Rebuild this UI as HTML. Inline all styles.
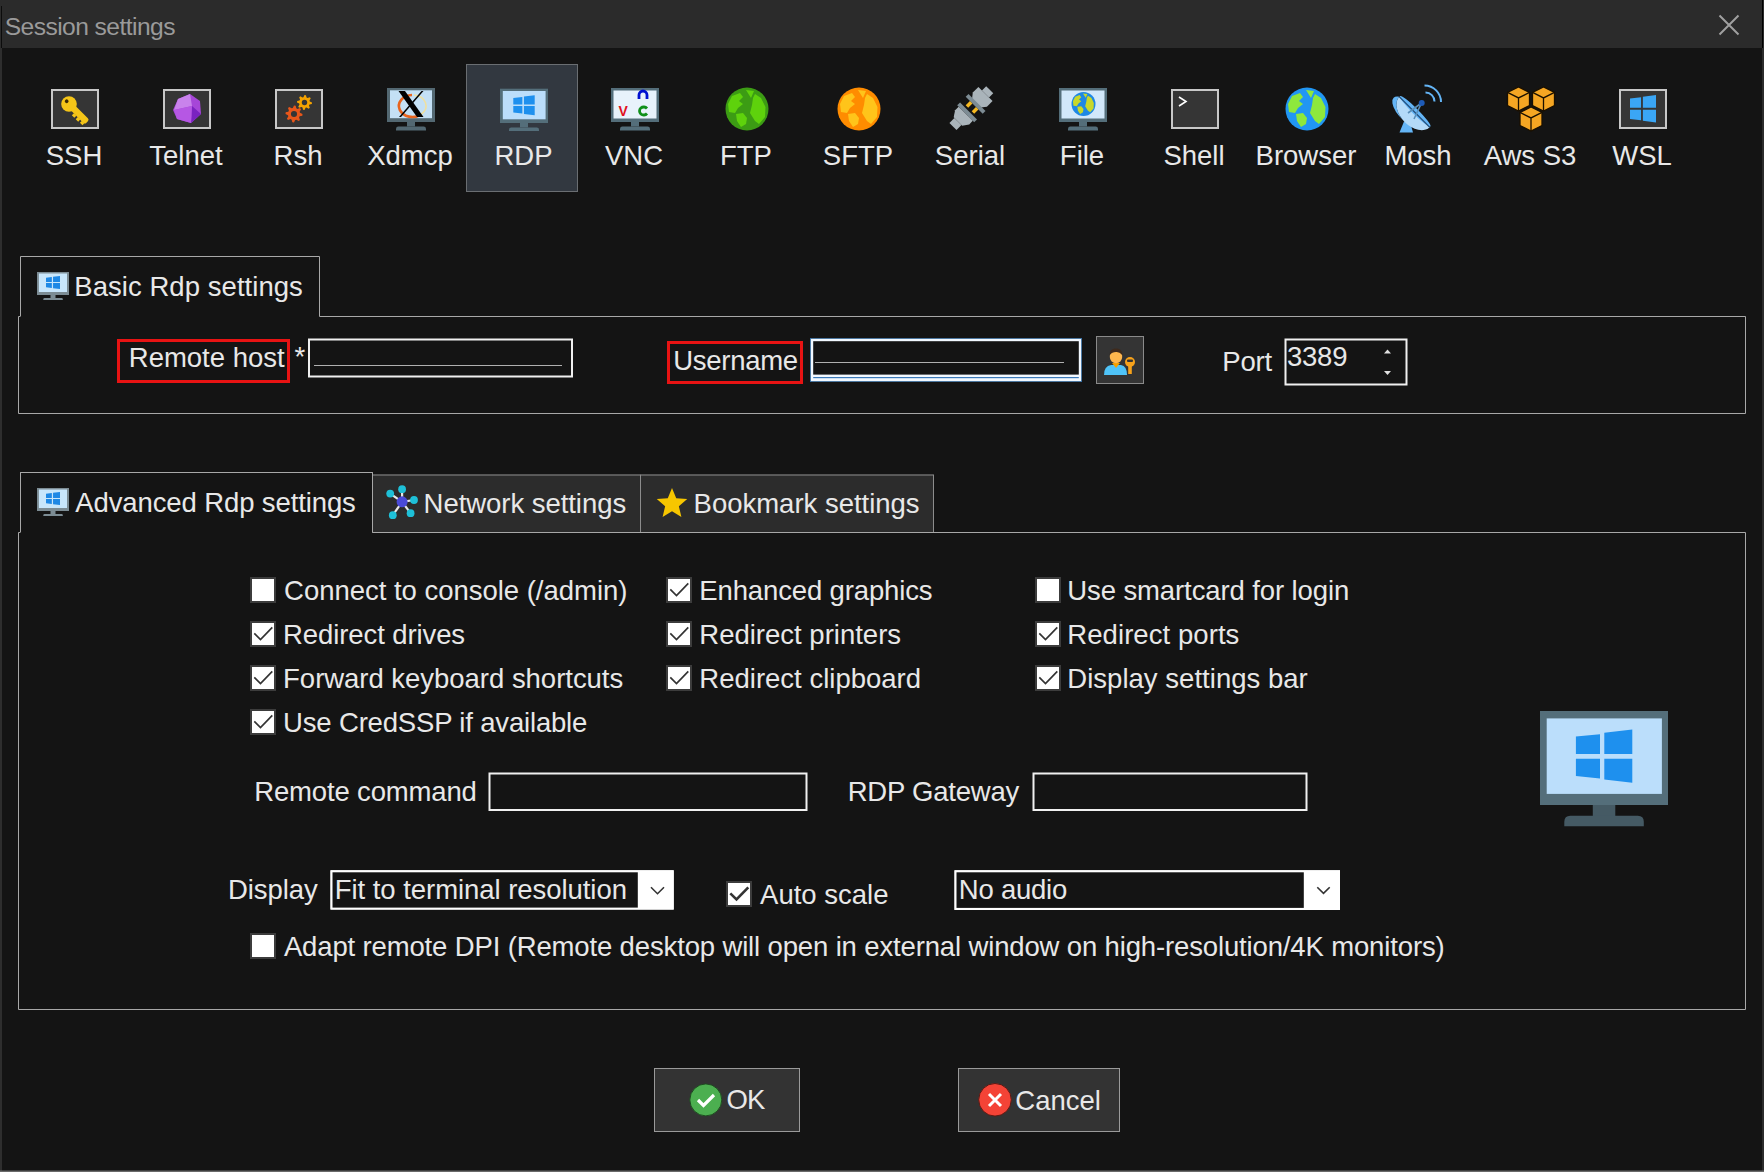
<!DOCTYPE html>
<html><head><meta charset="utf-8">
<style>
*{box-sizing:border-box;margin:0;padding:0}
html,body{width:1764px;height:1172px;overflow:hidden;background:#141414}
body{position:relative;font-family:"Liberation Sans",sans-serif;color:#e8e8e8;font-size:27.5px}
.t{position:absolute;white-space:nowrap;line-height:1}
.lbl{position:absolute;top:142px;width:112px;text-align:center;line-height:1;white-space:nowrap}
svg{position:absolute;left:0;top:0}
</style></head><body>
<svg width="1764" height="1172" viewBox="0 0 1764 1172">
<rect x="0" y="0" width="1764" height="48" fill="#2b2b2b"/>
<path d="M1719.5 15.5L1738.5 34.5M1738.5 15.5L1719.5 34.5" stroke="#a0a0a0" stroke-width="2" fill="none"/>
<rect x="466" y="64" width="112" height="128" fill="#323840"/>
<path fill-rule="evenodd" fill="#6a6e72" d="M466 64H578V192H466Z M467 65V191H577V65Z"/>
<rect x="51" y="89" width="48" height="40" fill="#353535"/>
<path fill-rule="evenodd" fill="#c8c8c8" d="M51 89H99V129H51Z M53 91V127H97V91Z"/>
<rect x="163" y="89" width="48" height="40" fill="#353535"/>
<path fill-rule="evenodd" fill="#c8c8c8" d="M163 89H211V129H163Z M165 91V127H209V91Z"/>
<rect x="275" y="89" width="48" height="40" fill="#353535"/>
<path fill-rule="evenodd" fill="#c8c8c8" d="M275 89H323V129H275Z M277 91V127H321V91Z"/>
<rect x="1171" y="89" width="48" height="40" fill="#353535"/>
<path fill-rule="evenodd" fill="#c8c8c8" d="M1171 89H1219V129H1171Z M1173 91V127H1217V91Z"/>
<rect x="1619" y="89" width="48" height="40" fill="#353535"/>
<path fill-rule="evenodd" fill="#c8c8c8" d="M1619 89H1667V129H1619Z M1621 91V127H1665V91Z"/>
<g transform="translate(69,104) rotate(45)"><rect x="3" y="-3.2" width="22.5" height="6.4" rx="2" fill="#f5c518"/><path d="M10 3H13.5V6H10Z M15.5 3H19V6H15.5Z M21 3H24.5V5.5H21Z" fill="#f5c518"/><circle cx="0" cy="0" r="7.8" fill="#f5c518"/><circle cx="-3.6" cy="-0.3" r="1.9" fill="#3b2a05"/></g>
<path d="M178 99L190 94L200 101L201 114L191 123L177 119L173 110Z" fill="#a646d8"/><path d="M178 99L190 94L192 106L174 110Z" fill="#c982ec"/><path d="M192 106L201 114L191 123Z" fill="#7a22c0"/><path d="M174 110L192 106L191 123L177 119Z" fill="#b657e4"/>
<polygon points="312.00,102.50 311.86,103.96 309.49,104.57 308.99,105.50 309.80,107.80 308.67,108.74 306.57,107.49 305.55,107.80 304.50,110.00 303.04,109.86 302.43,107.49 301.50,106.99 299.20,107.80 298.26,106.67 299.51,104.57 299.20,103.55 297.00,102.50 297.14,101.04 299.51,100.43 300.01,99.50 299.20,97.20 300.33,96.26 302.43,97.51 303.45,97.20 304.50,95.00 305.96,95.14 306.57,97.51 307.50,98.01 309.80,97.20 310.74,98.33 309.49,100.43 309.80,101.45" fill="#f5a300"/>
<circle cx="304.5" cy="102.5" r="2.70" fill="#353535"/>
<polygon points="302.50,114.00 302.34,115.66 299.65,116.34 299.09,117.40 300.01,120.01 298.72,121.07 296.34,119.65 295.19,120.00 294.00,122.50 292.34,122.34 291.66,119.65 290.60,119.09 287.99,120.01 286.93,118.72 288.35,116.34 288.00,115.19 285.50,114.00 285.66,112.34 288.35,111.66 288.91,110.60 287.99,107.99 289.28,106.93 291.66,108.35 292.81,108.00 294.00,105.50 295.66,105.66 296.34,108.35 297.40,108.91 300.01,107.99 301.07,109.28 299.65,111.66 300.00,112.81" fill="#e8561a"/>
<circle cx="294" cy="114" r="3.06" fill="#353535"/>
<rect x="387" y="88" width="48" height="34" fill="#536872"/>
<rect x="390" y="90.3" width="42" height="27.900000000000006" fill="#c4e0f5"/>
<rect x="407" y="122" width="8" height="4.5" fill="#536872"/>
<path d="M396 130.5V128.9Q396 126.5 398.4 126.5H423.6Q426 126.5 426 128.9V130.5Z" fill="#536872"/>
<path d="M412 95 A13.5 11 0 1 0 421 114.5" stroke="#e8641e" stroke-width="2.6" fill="none"/><path d="M421 114.5 A13.5 11 0 0 0 414 95" stroke="#efe0a0" stroke-width="1.6" fill="none"/><path d="M398.5 91H405L423.5 117H417Z" fill="#000"/><path d="M421.5 91H423.5L401 117H399Z" fill="#000"/>
<rect x="500" y="88.7" width="48" height="34.3" fill="#546e7a"/>
<rect x="502.8" y="91" width="42.80000000000001" height="28.299999999999997" fill="#bbdefb"/>
<rect x="520" y="123" width="8" height="4.400000000000006" fill="#546e7a"/>
<path d="M509 131V129.56Q509 127.4 511.15999999999997 127.4H536.84Q539 127.4 539 129.56V131Z" fill="#546e7a"/>
<path fill="#1e90ee" d="M513.3 97.887L522.344 96.9915V104.45H513.3Z M523.944 96.494L534.7 95.3V104.45H523.944Z M513.3 106.05H522.344V113.5085L513.3 112.613Z M523.944 106.05H534.7V115.2L523.944 114.006Z"/>
<rect x="611" y="88" width="48" height="34" fill="#546e7a"/>
<rect x="613.5" y="90.5" width="43.0" height="28.0" fill="#e8f2fb"/>
<rect x="631" y="122" width="8" height="4.5" fill="#546e7a"/>
<path d="M620 130.5V128.9Q620 126.5 622.4 126.5H647.6Q650 126.5 650 128.9V130.5Z" fill="#546e7a"/>
<text x="618.5" y="116" font-family="Liberation Sans" font-weight="bold" font-size="14" fill="#e01020">V</text><path d="M639 99 V95 A4 4 0 0 1 647 95 V99" stroke="#0010d0" stroke-width="2.8" fill="none"/><path d="M647 108.5 A4.2 4 0 1 0 647 113.5" stroke="#10901a" stroke-width="2.8" fill="none"/>
<circle cx="747" cy="109" r="21.5" fill="#3c9c14"/>
<polygon fill="#5ed20c" points="728.00,104.00 732.00,96.00 740.00,93.00 743.00,97.00 739.00,101.00 743.00,104.00 738.00,108.00 735.00,113.00 729.00,112.00"/>
<polygon fill="#5ed20c" points="736.00,114.00 743.00,113.00 747.00,118.00 746.00,124.00 741.00,127.00 737.00,121.00"/>
<polygon fill="#5ed20c" points="755.00,94.00 761.00,98.00 765.50,107.00 765.00,117.00 759.00,124.00 755.00,121.00 750.00,113.00 752.00,105.00 753.00,98.00"/>
<polygon fill="#5ed20c" points="746.00,90.00 754.00,91.00 751.00,98.00"/>
<circle cx="859" cy="109" r="21.5" fill="#ff8c00"/>
<polygon fill="#ffc41a" points="840.00,104.00 844.00,96.00 852.00,93.00 855.00,97.00 851.00,101.00 855.00,104.00 850.00,108.00 847.00,113.00 841.00,112.00"/>
<polygon fill="#ffc41a" points="848.00,114.00 855.00,113.00 859.00,118.00 858.00,124.00 853.00,127.00 849.00,121.00"/>
<polygon fill="#ffc41a" points="867.00,94.00 873.00,98.00 877.50,107.00 877.00,117.00 871.00,124.00 867.00,121.00 862.00,113.00 864.00,105.00 865.00,98.00"/>
<polygon fill="#ffc41a" points="858.00,90.00 866.00,91.00 863.00,98.00"/>
<circle cx="1307" cy="109" r="21.5" fill="#2196f3"/>
<polygon fill="#8ee83c" points="1288.00,104.00 1292.00,96.00 1300.00,93.00 1303.00,97.00 1299.00,101.00 1303.00,104.00 1298.00,108.00 1295.00,113.00 1289.00,112.00"/>
<polygon fill="#8ee83c" points="1296.00,114.00 1303.00,113.00 1307.00,118.00 1306.00,124.00 1301.00,127.00 1297.00,121.00"/>
<polygon fill="#8ee83c" points="1315.00,94.00 1321.00,98.00 1325.50,107.00 1325.00,117.00 1319.00,124.00 1315.00,121.00 1310.00,113.00 1312.00,105.00 1313.00,98.00"/>
<polygon fill="#8ee83c" points="1306.00,90.00 1314.00,91.00 1311.00,98.00"/>
<g transform="rotate(45 971 108.5)"><rect x="966" y="82" width="10" height="6" fill="#aab4ba"/><path d="M961 88H981V96L977 101H965L961 96Z" fill="#aab4ba"/><rect x="959" y="100" width="24" height="4" fill="#7d8c94"/><rect x="965" y="104" width="3.5" height="6" fill="#f5b820"/><rect x="973.5" y="104" width="3.5" height="6" fill="#f5b820"/><rect x="959" y="112" width="24" height="4" fill="#7d8c94"/><path d="M961 121V116H981V121L977 127H965Z" fill="#aab4ba"/><rect x="966" y="127" width="10" height="7" fill="#aab4ba"/></g>
<rect x="1059" y="88" width="48" height="34" fill="#546e7a"/>
<rect x="1061.5" y="90.5" width="43.0" height="28.0" fill="#d2e8fa"/>
<rect x="1079" y="122" width="8" height="4.5" fill="#546e7a"/>
<path d="M1068 130.5V128.9Q1068 126.5 1070.4 126.5H1095.6Q1098 126.5 1098 128.9V130.5Z" fill="#546e7a"/>
<circle cx="1083.5" cy="104" r="12" fill="#1e88e5"/>
<polygon fill="#c8d82a" points="1072.90,101.21 1075.13,96.74 1079.59,95.07 1081.27,97.30 1079.03,99.53 1081.27,101.21 1078.48,103.44 1076.80,106.23 1073.45,105.67"/>
<polygon fill="#c8d82a" points="1077.36,106.79 1081.27,106.23 1083.50,109.02 1082.94,112.37 1080.15,114.05 1077.92,110.70"/>
<polygon fill="#c8d82a" points="1087.97,95.63 1091.31,97.86 1093.83,102.88 1093.55,108.47 1090.20,112.37 1087.97,110.70 1085.17,106.23 1086.29,101.77 1086.85,97.86"/>
<polygon fill="#c8d82a" points="1082.94,93.40 1087.41,93.95 1085.73,97.86"/>
<path d="M1179 97L1186 101.5L1179 106" stroke="#ffffff" stroke-width="1.6" fill="none"/>
<path d="M1399.5 132.5H1413L1410.5 123.5L1404 121.5Z" fill="#64b5f6"/><g transform="translate(1414.5,112) rotate(45)"><path d="M-21.5 0 A21.5 14 0 0 0 21.5 0Z" fill="#b3daf8"/><path d="M-21.5 0 A21.5 14 0 0 0 -2 13.8 A21.5 9 0 0 1 -21.5 0Z" fill="#64b5f6"/><ellipse cx="0" cy="-1" rx="21.5" ry="3" fill="#64b5f6"/><path d="M-21.5 0H21.5" stroke="#24507a" stroke-width="1.2"/></g><path d="M1408 113L1421.5 103M1414 119L1421.5 103" stroke="#5a8fb8" stroke-width="1.6"/><circle cx="1421.7" cy="103" r="3" fill="#1e5bb8"/><path d="M1425.5 92.5 A9 9 0 0 1 1434.5 101.5" stroke="#64b5f6" stroke-width="2" fill="none"/><path d="M1424.5 85.5 A16.5 16.5 0 0 1 1441 102" stroke="#64b5f6" stroke-width="2" fill="none"/>
<path d="M1518.5 86.9L1529.5 92.4V105.6L1518.5 111.1L1507.5 105.6V92.4Z" fill="#f5a623" stroke="#1a1000" stroke-width="1.3"/>
<path d="M1507.5 92.4L1518.5 97.9L1529.5 92.4M1518.5 97.9V111.1" stroke="#1a1000" stroke-width="1.3" fill="none"/>
<path d="M1543.5 86.9L1554.5 92.4V105.6L1543.5 111.1L1532.5 105.6V92.4Z" fill="#f5a623" stroke="#1a1000" stroke-width="1.3"/>
<path d="M1532.5 92.4L1543.5 97.9L1554.5 92.4M1543.5 97.9V111.1" stroke="#1a1000" stroke-width="1.3" fill="none"/>
<path d="M1531 106.9L1542.0 112.4V125.6L1531 131.1L1520.0 125.6V112.4Z" fill="#f5a623" stroke="#1a1000" stroke-width="1.3"/>
<path d="M1520.0 112.4L1531 117.9L1542.0 112.4M1531 117.9V131.1" stroke="#1a1000" stroke-width="1.3" fill="none"/>
<path fill="#3aa6f5" d="M1630 98.575L1641.06 97.3375V107.85H1630Z M1642.8600000000001 96.65L1656 95V107.85H1642.8600000000001Z M1630 109.65H1641.06V120.1625L1630 118.925Z M1642.8600000000001 109.65H1656V122.5L1642.8600000000001 120.85Z"/>
<path d="M20.5 316V256.5H319.5V316.5H1745.5V413.5H18.5V316.5H20.5" fill="none" stroke="#a8a8a8" stroke-width="1"/>
<rect x="37" y="272" width="32" height="23" fill="#7c8c94"/>
<rect x="38.9" y="273.5" width="28.1" height="18.5" fill="#c8e6fb"/>
<rect x="50.5" y="295" width="5.0" height="3" fill="#7c8c94"/>
<path d="M43.3 300V299.2Q43.3 298 44.5 298H61.599999999999994Q62.8 298 62.8 299.2V300Z" fill="#7c8c94"/>
<path fill="#1e88e5" d="M46 277.69L51.839999999999996 277.105V281.9H46Z M53.04 276.78L60 276V281.9H53.04Z M46 283.1H51.839999999999996V287.895L46 287.31Z M53.04 283.1H60V289L53.04 288.22Z"/>
<path fill-rule="evenodd" fill="#e81313" d="M117 339H290V383H117Z M120 342V380H287V342Z"/>
<path fill-rule="evenodd" fill="#f0f0f0" d="M308 338.5H573V377.5H308Z M310 340.5V375.5H571V340.5Z"/>
<rect x="314" y="365" width="248" height="1" fill="#b0b0b0"/>
<path fill-rule="evenodd" fill="#e81313" d="M667 341H803V384H667Z M670 344V381H800V344Z"/>
<path fill-rule="evenodd" fill="#2a6fb0" d="M810 338H1082V382H810Z M810.8 338.8V381.2H1081.2V338.8Z"/>
<rect x="810.8" y="338.8" width="270.4000000000001" height="42.39999999999998" fill="#f2f8ff"/>
<rect x="813.2" y="341.2" width="265.5999999999999" height="33.400000000000034" fill="#141414"/>
<rect x="813.2" y="377" width="265.5999999999999" height="1.1999999999999886" fill="#3a78b8"/>
<rect x="815" y="362" width="249" height="1" fill="#b0b0b0"/>
<rect x="1096" y="336" width="48" height="48" fill="#343434"/>
<path fill-rule="evenodd" fill="#8a8a8a" d="M1096 336H1144V384H1096Z M1097 337V383H1143V337Z"/>
<path d="M1104 375 Q1104 366 1111 365 H1121 Q1127 366 1127 375Z" fill="#4fc3f7"/><path d="M1112 363 L1116 368 L1120 363Z" fill="#f5a000"/><circle cx="1116" cy="357" r="6.2" fill="#ffb74d"/><path d="M1109.5 355 Q1110 348 1116 348.5 Q1122 348 1122.5 355 Q1119 351.5 1116 352 Q1112 352 1109.5 355Z" fill="#3e2a1c"/><circle cx="1130" cy="362" r="5" fill="#f7a21b"/><rect x="1127" y="359.5" width="6" height="2.5" rx="1" fill="#343434"/><rect x="1128.2" y="365" width="3.6" height="9" fill="#f7a21b"/>
<path fill-rule="evenodd" fill="#f0f0f0" d="M1284.5 338.5H1407.5V385.5H1284.5Z M1286.5 340.5V383.5H1405.5V340.5Z"/>
<path d="M1384 353.5L1387.5 349.5L1391 353.5Z M1384 371L1387.5 375L1391 371Z" fill="#e0e0e0"/>
<rect x="372" y="474.5" width="269" height="57.5" fill="#2c2c2c"/>
<path fill-rule="evenodd" fill="#8c8c8c" d="M372 474.5H641V532H372Z M372 475.5V532H640V475.5Z"/>
<rect x="640" y="474.5" width="294" height="57.5" fill="#2c2c2c"/>
<path fill-rule="evenodd" fill="#8c8c8c" d="M640 474.5H934V532H640Z M641 475.5V532H933V475.5Z"/>
<path d="M20.5 532V472.5H372.5V532.5H1745.5V1009.5H18.5V532.5H20.5" fill="none" stroke="#a8a8a8" stroke-width="1"/>
<rect x="21" y="473" width="351" height="60" fill="#141414"/>
<path d="M20.5 532V472.5H372.5V532.5" fill="none" stroke="#a8a8a8" stroke-width="1"/>
<rect x="37" y="488" width="32" height="23" fill="#7c8c94"/>
<rect x="38.9" y="489.5" width="28.1" height="18.5" fill="#c8e6fb"/>
<rect x="50.5" y="511" width="5.0" height="3" fill="#7c8c94"/>
<path d="M43.3 516V515.2Q43.3 514 44.5 514H61.599999999999994Q62.8 514 62.8 515.2V516Z" fill="#7c8c94"/>
<path fill="#1e88e5" d="M46 493.69L51.839999999999996 493.105V497.9H46Z M53.04 492.78L60 492V497.9H53.04Z M46 499.1H51.839999999999996V503.895L46 503.31Z M53.04 499.1H60V505L53.04 504.22Z"/>
<g stroke="#e8e8e8" stroke-width="2.2"><path d="M402.1 501.8L402.1 489.2"/><path d="M402.1 501.8L390.2 493.6"/><path d="M402.1 501.8L414 500"/><path d="M402.1 501.8L392.8 515.2"/><path d="M402.1 501.8L410.6 513.2"/></g>
<circle cx="402.1" cy="489.2" r="3.9" fill="#1ec0d8"/><circle cx="390.2" cy="493.6" r="3.9" fill="#1ec0d8"/><circle cx="414" cy="500" r="3.9" fill="#1ec0d8"/><circle cx="392.8" cy="515.2" r="3.9" fill="#1ec0d8"/><circle cx="410.6" cy="513.2" r="3.9" fill="#1ec0d8"/>
<circle cx="402.1" cy="501.8" r="5.5" fill="#4a4ad8"/>
<polygon points="672.00,488.00 676.23,498.18 687.22,499.06 678.85,506.22 681.40,516.94 672.00,511.20 662.60,516.94 665.15,506.22 656.78,499.06 667.77,498.18" fill="#f7c600"/>
<rect x="250" y="577" width="26" height="26" fill="#ffffff"/>
<path fill-rule="evenodd" fill="#3c3c3c" d="M250 577H276V603H250Z M252 579V601H274V579Z"/>
<rect x="250" y="621" width="26" height="26" fill="#ffffff"/>
<path fill-rule="evenodd" fill="#3c3c3c" d="M250 621H276V647H250Z M252 623V645H274V623Z"/>
<path d="M254.3 633.4L260.5 639.5L272.3 627.3" fill="none" stroke="#333" stroke-width="1.7"/>
<rect x="250" y="665" width="26" height="26" fill="#ffffff"/>
<path fill-rule="evenodd" fill="#3c3c3c" d="M250 665H276V691H250Z M252 667V689H274V667Z"/>
<path d="M254.3 677.4L260.5 683.5L272.3 671.3" fill="none" stroke="#333" stroke-width="1.7"/>
<rect x="250" y="709" width="26" height="26" fill="#ffffff"/>
<path fill-rule="evenodd" fill="#3c3c3c" d="M250 709H276V735H250Z M252 711V733H274V711Z"/>
<path d="M254.3 721.4L260.5 727.5L272.3 715.3" fill="none" stroke="#333" stroke-width="1.7"/>
<rect x="666" y="577" width="26" height="26" fill="#ffffff"/>
<path fill-rule="evenodd" fill="#3c3c3c" d="M666 577H692V603H666Z M668 579V601H690V579Z"/>
<path d="M670.3 589.4L676.5 595.5L688.3 583.3" fill="none" stroke="#333" stroke-width="1.7"/>
<rect x="666" y="621" width="26" height="26" fill="#ffffff"/>
<path fill-rule="evenodd" fill="#3c3c3c" d="M666 621H692V647H666Z M668 623V645H690V623Z"/>
<path d="M670.3 633.4L676.5 639.5L688.3 627.3" fill="none" stroke="#333" stroke-width="1.7"/>
<rect x="666" y="665" width="26" height="26" fill="#ffffff"/>
<path fill-rule="evenodd" fill="#3c3c3c" d="M666 665H692V691H666Z M668 667V689H690V667Z"/>
<path d="M670.3 677.4L676.5 683.5L688.3 671.3" fill="none" stroke="#333" stroke-width="1.7"/>
<rect x="1035" y="577" width="26" height="26" fill="#ffffff"/>
<path fill-rule="evenodd" fill="#3c3c3c" d="M1035 577H1061V603H1035Z M1037 579V601H1059V579Z"/>
<rect x="1035" y="621" width="26" height="26" fill="#ffffff"/>
<path fill-rule="evenodd" fill="#3c3c3c" d="M1035 621H1061V647H1035Z M1037 623V645H1059V623Z"/>
<path d="M1039.3 633.4L1045.5 639.5L1057.3 627.3" fill="none" stroke="#333" stroke-width="1.7"/>
<rect x="1035" y="665" width="26" height="26" fill="#ffffff"/>
<path fill-rule="evenodd" fill="#3c3c3c" d="M1035 665H1061V691H1035Z M1037 667V689H1059V667Z"/>
<path d="M1039.3 677.4L1045.5 683.5L1057.3 671.3" fill="none" stroke="#333" stroke-width="1.7"/>
<path fill-rule="evenodd" fill="#f0f0f0" d="M488.5 772.5H807.5V811H488.5Z M490.5 774.5V809H805.5V774.5Z"/>
<path fill-rule="evenodd" fill="#f0f0f0" d="M1032.5 772.5H1307.5V811H1032.5Z M1034.5 774.5V809H1305.5V774.5Z"/>
<rect x="330.5" y="870.3" width="343.20000000000005" height="39.30000000000007" fill="#ffffff"/>
<path fill-rule="evenodd" fill="#ffffff" d="M330.5 870.3H673.7V909.6H330.5Z M332.5 872.3V907.6H671.7V872.3Z"/>
<rect x="332.5" y="872.3" width="305.29999999999995" height="35.30000000000007" fill="#141414"/>
<path d="M651 887.2L657.5 893.7L664 887.2" stroke="#333" stroke-width="1.6" fill="none"/>
<rect x="726" y="881" width="26" height="26" fill="#ffffff"/>
<path fill-rule="evenodd" fill="#3c3c3c" d="M726 881H752V907H726Z M728 883V905H750V883Z"/>
<path d="M730.3 893.4L736.5 899.5L748.3 887.3" fill="none" stroke="#333" stroke-width="2.6"/>
<rect x="954.5" y="870.3" width="385.5" height="39.60000000000002" fill="#ffffff"/>
<path fill-rule="evenodd" fill="#ffffff" d="M954.5 870.3H1340V909.9H954.5Z M956.5 872.3V907.9H1338V872.3Z"/>
<rect x="956.5" y="872.3" width="347.29999999999995" height="35.60000000000002" fill="#141414"/>
<path d="M1317.3 887.2L1323.5 893.4L1329.7 887.2" stroke="#333" stroke-width="1.6" fill="none"/>
<rect x="250" y="933" width="26" height="26" fill="#ffffff"/>
<path fill-rule="evenodd" fill="#3c3c3c" d="M250 933H276V959H250Z M252 935V957H274V935Z"/>
<rect x="1540" y="711" width="128" height="94" fill="#546e7a"/>
<rect x="1546.7" y="718.4" width="115.20000000000005" height="75.5" fill="#bbdefb"/>
<rect x="1592.8" y="805" width="22.5" height="11" fill="#455a64"/>
<path d="M1564.3 826.2V821.8Q1564.3 815.8 1570.3 815.8H1637.8Q1643.8 815.8 1643.8 821.8V826.2Z" fill="#455a64"/>
<path fill="#1e90ee" d="M1575.9 736.6L1600 734.3V754.1H1575.9Z M1604.3 732.8L1632.3 729.4V754.1H1604.3Z M1575.9 758.8H1600V778.6L1575.9 776Z M1604.3 758.8H1632.3V782.7L1604.3 779.5Z"/>
<rect x="654" y="1068" width="146" height="64" fill="#333333"/>
<path fill-rule="evenodd" fill="#9a9a9a" d="M654 1068H800V1132H654Z M655 1069V1131H799V1069Z"/>
<circle cx="705.8" cy="1099.9" r="16" fill="#4caf50" stroke="#1e4a20" stroke-width="1"/><path d="M698 1100L703.5 1105.5L714 1095" stroke="#ffffff" stroke-width="3.2" fill="none"/>
<rect x="958" y="1068" width="162" height="64" fill="#333333"/>
<path fill-rule="evenodd" fill="#9a9a9a" d="M958 1068H1120V1132H958Z M959 1069V1131H1119V1069Z"/>
<circle cx="995" cy="1099.8" r="16.3" fill="#f44336" stroke="#5a1a14" stroke-width="1"/><path d="M989 1094L1001 1106M1001 1094L989 1106" stroke="#ffffff" stroke-width="3" fill="none"/>
<rect x="1762" y="48" width="2" height="1124" fill="#2c2c2c"/>
<rect x="1762" y="0" width="1" height="48" fill="#000000"/>
<rect x="0" y="48" width="2" height="1124" fill="#2e2e2e"/>
<rect x="1" y="6" width="1" height="42" fill="#0c0c0c"/>
<rect x="0" y="1170.5" width="1764" height="1.5" fill="#6a6a6a"/>
</svg>
<div class="t" style="left:4.70px;top:15.2px;font-size:24.6px;color:#9a9a9a;letter-spacing:-0.550px">Session settings</div>
<div class="lbl" style="left:18px">SSH</div>
<div class="lbl" style="left:130px">Telnet</div>
<div class="lbl" style="left:242px">Rsh</div>
<div class="lbl" style="left:354px">Xdmcp</div>
<div class="lbl" style="left:467.5px">RDP</div>
<div class="lbl" style="left:578px">VNC</div>
<div class="lbl" style="left:690px">FTP</div>
<div class="lbl" style="left:802px">SFTP</div>
<div class="lbl" style="left:914px">Serial</div>
<div class="lbl" style="left:1026px">File</div>
<div class="lbl" style="left:1138px">Shell</div>
<div class="lbl" style="left:1250px">Browser</div>
<div class="lbl" style="left:1362px">Mosh</div>
<div class="lbl" style="left:1474px">Aws S3</div>
<div class="lbl" style="left:1586px">WSL</div>
<div class="t" style="left:74.30px;top:272.5px;letter-spacing:0.047px">Basic Rdp settings</div>
<div class="t" style="left:128.80px;top:343.7px;letter-spacing:-0.010px">Remote host</div>
<div class="t" style="left:294.50px;top:343px">*</div>
<div class="t" style="left:673.30px;top:347.2px;letter-spacing:-0.286px">Username</div>
<div class="t" style="left:1222.30px;top:347.5px;letter-spacing:-0.200px">Port</div>
<div class="t" style="left:1287.00px;top:343.3px;letter-spacing:-0.233px">3389</div>
<div class="t" style="left:75.30px;top:488.8px;letter-spacing:-0.115px">Advanced Rdp settings</div>
<div class="t" style="left:423.60px;top:489.6px;letter-spacing:-0.047px">Network settings</div>
<div class="t" style="left:693.60px;top:489.5px;letter-spacing:-0.013px">Bookmark settings</div>
<div class="t" style="left:284.10px;top:576.6px;letter-spacing:-0.023px">Connect to console (/admin)</div>
<div class="t" style="left:283.10px;top:620.6px;letter-spacing:-0.100px">Redirect drives</div>
<div class="t" style="left:283.10px;top:664.6px;letter-spacing:-0.028px">Forward keyboard shortcuts</div>
<div class="t" style="left:283.10px;top:708.6px;letter-spacing:-0.174px">Use CredSSP if available</div>
<div class="t" style="left:699.30px;top:576.6px;letter-spacing:-0.137px">Enhanced graphics</div>
<div class="t" style="left:699.30px;top:620.6px;letter-spacing:0.000px">Redirect printers</div>
<div class="t" style="left:699.30px;top:664.6px;letter-spacing:0.006px">Redirect clipboard</div>
<div class="t" style="left:1067.30px;top:576.6px;letter-spacing:-0.105px">Use smartcard for login</div>
<div class="t" style="left:1067.30px;top:620.6px;letter-spacing:0.069px">Redirect ports</div>
<div class="t" style="left:1067.30px;top:664.6px;letter-spacing:0.026px">Display settings bar</div>
<div class="t" style="left:254.20px;top:777.5px;letter-spacing:-0.154px">Remote command</div>
<div class="t" style="left:847.70px;top:777.5px;letter-spacing:-0.220px">RDP Gateway</div>
<div class="t" style="left:228.00px;top:875.7px;letter-spacing:-0.083px">Display</div>
<div class="t" style="left:334.80px;top:875.5px;letter-spacing:-0.052px">Fit to terminal resolution</div>
<div class="t" style="left:760.10px;top:880.7px;letter-spacing:0.000px">Auto scale</div>
<div class="t" style="left:958.80px;top:875.5px;letter-spacing:-0.229px">No audio</div>
<div class="t" style="left:283.90px;top:933.1px;letter-spacing:-0.143px">Adapt remote DPI (Remote desktop will open in external window on high-resolution/4K monitors)</div>
<div class="t" style="left:726.60px;top:1086.2px;letter-spacing:-0.900px">OK</div>
<div class="t" style="left:1015.30px;top:1087px;letter-spacing:-0.020px">Cancel</div>
</body></html>
